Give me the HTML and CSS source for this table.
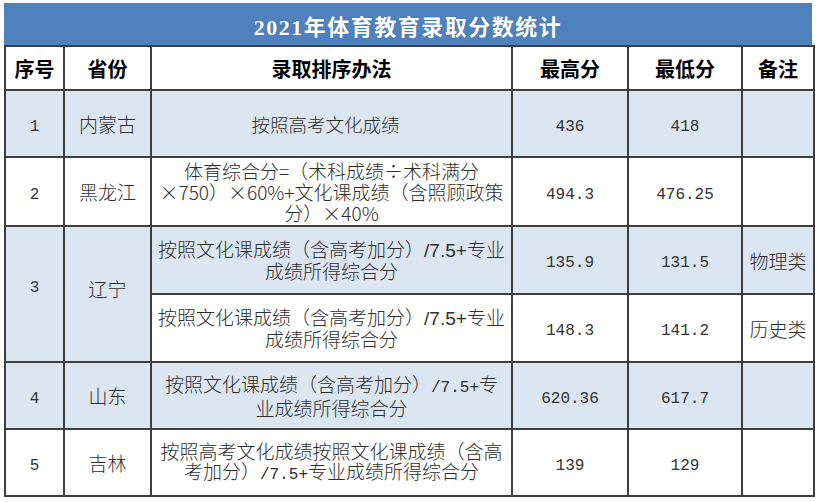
FILE: index.html
```html
<!DOCTYPE html>
<html lang="zh-CN">
<head>
<meta charset="utf-8">
<title>2021年体育教育录取分数统计</title>
<link rel="stylesheet" href="styles.css">
</head>
<body>
<div class="sheet">
  <div class="title">2021年体育教育录取分数统计</div>
  <table class="grid">
    <colgroup>
      <col class="c-idx">
      <col class="c-prov">
      <col class="c-rule">
      <col class="c-max">
      <col class="c-min">
      <col class="c-note">
    </colgroup>
    <thead>
      <tr class="head">
        <th>序号</th>
        <th>省份</th>
        <th>录取排序办法</th>
        <th>最高分</th>
        <th>最低分</th>
        <th>备注</th>
      </tr>
    </thead>
    <tbody>
      <tr class="r67 shade">
        <td class="num">1</td>
        <td class="prov">内蒙古</td>
        <td class="rule single">按照高考文化成绩</td>
        <td class="num">436</td>
        <td class="num">418</td>
        <td></td>
      </tr>
      <tr class="r69">
        <td class="num">2</td>
        <td class="prov">黑龙江</td>
        <td class="rule tri">体育综合分=（术科成绩<span class="fw">÷</span>术科满分<br><span class="fw">×</span>750）<span class="fw">×</span>60%+文化课成绩（含照顾政策<br>分）<span class="fw">×</span>40%</td>
        <td class="num">494.3</td>
        <td class="num">476.25</td>
        <td></td>
      </tr>
      <tr class="r68 shade">
        <td class="num shade span" rowspan="2">3</td>
        <td class="prov shade span" rowspan="2">辽宁</td>
        <td class="rule">按照文化课成绩（含高考加分）<span class="lat">/7.5+</span>专业<br>成绩所得综合分</td>
        <td class="num">135.9</td>
        <td class="num">131.5</td>
        <td class="note">物理类</td>
      </tr>
      <tr class="r68">
        <td class="rule">按照文化课成绩（含高考加分）<span class="lat">/7.5+</span>专业<br>成绩所得综合分</td>
        <td class="num">148.3</td>
        <td class="num">141.2</td>
        <td class="note">历史类</td>
      </tr>
      <tr class="r67 shade">
        <td class="num">4</td>
        <td class="prov">山东</td>
        <td class="rule">按照文化课成绩（含高考加分）<span class="mono">/7.5+</span>专<br>业成绩所得综合分</td>
        <td class="num">620.36</td>
        <td class="num">617.7</td>
        <td></td>
      </tr>
      <tr class="r67">
        <td class="num">5</td>
        <td class="prov">吉林</td>
        <td class="rule">按照高考文化成绩按照文化课成绩（含高<br>考加分）<span class="mono">/7.5+</span>专业成绩所得综合分</td>
        <td class="num">139</td>
        <td class="num">129</td>
        <td></td>
      </tr>
    </tbody>
  </table>
</div>
</body>
</html>
```

FILE: styles.css
```css
html, body {
  margin: 0;
  padding: 0;
  background: #ffffff;
}

body {
  font-family: "Noto Sans CJK SC", "Noto Sans", sans-serif;
  color: #2e2e2e;
}

.sheet {
  padding: 3px 0 0 4px;
  width: 810px;
}

.title {
  width: 808px;
  height: 35px;
  padding-top: 7px;
  line-height: 35px;
  background: #4f81bd;
  color: #ffffff;
  text-align: center;
  font-family: "Liberation Serif", "Noto Sans CJK SC", serif;
  font-weight: bold;
  font-size: 22px;
  letter-spacing: 1.5px;
  text-shadow: 0 0 1px rgba(0, 0, 0, 0.25);
}

.grid {
  border-collapse: collapse;
  table-layout: fixed;
  width: 809px;
  margin-top: 0;
}

.c-idx { width: 59px; }
.c-prov { width: 87px; }
.c-rule { width: 361px; }
.c-max { width: 116px; }
.c-min { width: 114px; }
.c-note { width: 72px; }

.grid th,
.grid td {
  border: 2px solid #3e3e3e;
  padding: 0;
  text-align: center;
  vertical-align: middle;
  overflow: hidden;
  white-space: nowrap;
}

.head {
  height: 44px;
}

.head th {
  font-size: 20px;
  font-weight: bold;
  color: #000000;
  background: #ffffff;
}

.r67 { height: 67px; }
.r68 { height: 68px; }
.r69 { height: 69px; }

.shade td,
td.shade {
  background: #dce6f1;
}

.num {
  font-family: "Liberation Mono", "DejaVu Sans Mono", monospace;
  font-size: 16px;
  color: #333333;
}

.grid td.num {
  padding-top: 6px;
}

.prov {
  font-size: 19px;
  font-weight: 300;
  color: #2e2e2e;
}

.grid td.span {
  padding-top: 0;
  padding-bottom: 12px;
}

.rule {
  font-size: 19px;
  font-weight: 300;
  line-height: 20px;
  color: #2e2e2e;
}

.rule.single {
  font-size: 18.5px;
  padding-right: 12px;
}

.rule.tri {
  line-height: 21px;
}

.note {
  font-size: 19px;
  font-weight: 300;
  color: #2e2e2e;
}

.fw {
  font-variant-east-asian: full-width;
}

.lat {
  font-family: "Liberation Sans", Arial, sans-serif;
  font-size: 19px;
}

.mono {
  font-family: "Liberation Mono", "DejaVu Sans Mono", monospace;
  font-size: 16px;
}
```
